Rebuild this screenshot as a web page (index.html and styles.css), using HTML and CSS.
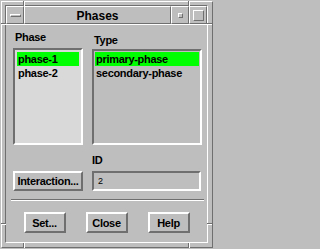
FILE: index.html
```html
<!DOCTYPE html>
<html>
<head>
<meta charset="utf-8">
<title>Phases</title>
<link rel="stylesheet" href="styles.css">
</head>
<body>
<div class="window">
  <div class="frame">
    <div class="inner">
      <div class="titlebar">
        <div class="tbtn"><span class="menu-bar"></span></div>
        <div class="title">Phases</div>
        <div class="tbtn"><span class="min-box"></span></div>
        <div class="tbtn"><span class="max-box"></span></div>
      </div>
      <div class="client">
        <div class="grid">
          <div class="label phase-label">Phase</div>
          <div class="label type-label">Type</div>
          <ul class="list phase-list">
            <li class="sel">phase-1</li>
            <li>phase-2</li>
          </ul>
          <ul class="list type-list">
            <li class="sel">primary-phase</li>
            <li>secondary-phase</li>
          </ul>
          <div class="spacer"></div>
          <div class="label id-label">ID</div>
          <button class="btn interaction">Interaction...</button>
          <div class="field">2</div>
        </div>
        <div class="sep"></div>
        <div class="actions">
          <button class="btn act">Set...</button>
          <button class="btn act">Close</button>
          <button class="btn act">Help</button>
        </div>
      </div>
    </div>
  </div>
  <svg class="marks" width="214" height="249" viewBox="0 0 214 249" shape-rendering="crispEdges">
    <rect x="23" y="1" width="1" height="5" fill="#6f6f6f"/>
    <rect x="24" y="1" width="1" height="5" fill="#ffffff"/>
    <rect x="188" y="1" width="1" height="5" fill="#6f6f6f"/>
    <rect x="189" y="1" width="1" height="5" fill="#ffffff"/>
    <rect x="23" y="243" width="1" height="5" fill="#6f6f6f"/>
    <rect x="24" y="243" width="1" height="5" fill="#ffffff"/>
    <rect x="188" y="243" width="1" height="5" fill="#6f6f6f"/>
    <rect x="189" y="243" width="1" height="5" fill="#ffffff"/>
    <rect x="1" y="23" width="5" height="1" fill="#6f6f6f"/>
    <rect x="1" y="24" width="5" height="1" fill="#ffffff"/>
    <rect x="1" y="223" width="5" height="1" fill="#6f6f6f"/>
    <rect x="1" y="224" width="5" height="1" fill="#ffffff"/>
    <rect x="207" y="23" width="5" height="1" fill="#6f6f6f"/>
    <rect x="207" y="24" width="5" height="1" fill="#ffffff"/>
    <rect x="207" y="223" width="5" height="1" fill="#6f6f6f"/>
    <rect x="207" y="224" width="5" height="1" fill="#ffffff"/>
  </svg>
</div>
</body>
</html>
```

FILE: styles.css
```css
html, body {
  margin: 0;
  padding: 0;
  background: #bebebe;
}

.window {
  position: relative;
  width: 214px;
  height: 249px;
  box-sizing: border-box;
  padding: 1px;
  background: #bebebe;
  font-family: "Liberation Sans", Arial, sans-serif;
  color: #000;
}

.frame {
  height: 100%;
  box-sizing: border-box;
  border: 1px solid;
  border-color: #ffffff #6f6f6f #6f6f6f #ffffff;
  padding: 3px 4px 4px 3px;
}

.inner {
  height: 100%;
  box-sizing: border-box;
  border: 1px solid;
  border-color: #6f6f6f #ffffff #ffffff #6f6f6f;
  display: flex;
  flex-direction: column;
}

.titlebar {
  display: flex;
  height: 18px;
  flex: 0 0 18px;
}

.tbtn {
  width: 18px;
  height: 18px;
  box-sizing: border-box;
  border: 1px solid;
  border-color: #ffffff #6f6f6f #6f6f6f #ffffff;
  display: flex;
  align-items: center;
  justify-content: center;
}

.menu-bar {
  display: block;
  width: 11px;
  height: 3px;
  box-sizing: border-box;
  border: 1px solid;
  border-color: #ffffff #6f6f6f #6f6f6f #ffffff;
}

.min-box {
  display: block;
  width: 5px;
  height: 5px;
  box-sizing: border-box;
  border: 1px solid;
  border-color: #ffffff #6f6f6f #6f6f6f #ffffff;
}

.max-box {
  display: block;
  width: 11px;
  height: 11px;
  box-sizing: border-box;
  border: 1px solid;
  border-color: #ffffff #6f6f6f #6f6f6f #ffffff;
}

.title {
  flex: 1;
  height: 18px;
  box-sizing: border-box;
  border: 1px solid;
  border-color: #ffffff #6f6f6f #6f6f6f #ffffff;
  display: flex;
  align-items: center;
  justify-content: center;
  font-size: 12px;
  font-weight: bold;
  padding-top: 1px;
}

.client {
  flex: 1;
  border-top: 1px solid #ffffff;
  padding-top: 6px;
}

.grid {
  display: grid;
  grid-template-columns: 70px 110px;
  column-gap: 9px;
  margin-left: 7px;
  align-items: start;
}

.label {
  font-size: 11px;
  font-weight: bold;
  letter-spacing: -0.3px;
  line-height: 13px;
  height: 13px;
}

.phase-label {
  padding-left: 2px;
}

.type-label {
  padding-left: 2px;
  margin-top: 3px;
}

.list {
  list-style: none;
  margin: 0;
  box-sizing: border-box;
  border: 2px solid;
  border-color: #6f6f6f #ffffff #ffffff #6f6f6f;
  font-size: 11px;
  font-weight: bold;
  letter-spacing: -0.3px;
}

.list li {
  height: 14px;
  line-height: 14px;
  padding-left: 1px;
  white-space: nowrap;
}

.list li.sel {
  background: #00ff00;
}

.phase-list {
  margin-top: 1px;
  height: 97px;
  background: #d9d9d9;
  padding: 2px 2px 0 2px;
}

.type-list {
  margin-top: 2px;
  height: 96px;
  background: #bebebe;
  padding: 1px 1px 0 1px;
}

.spacer {
  height: 13px;
}

.id-label {
  margin-top: 9px;
}

.btn {
  box-sizing: border-box;
  border: 2px solid;
  border-color: #ffffff #6f6f6f #6f6f6f #ffffff;
  background: #bebebe;
  font-family: "Liberation Sans", Arial, sans-serif;
  font-size: 11px;
  font-weight: bold;
  letter-spacing: -0.3px;
  color: #000;
  padding: 0;
  margin: 0;
  display: flex;
  align-items: center;
  justify-content: center;
}

.interaction {
  margin-top: 4px;
  width: 70px;
  height: 20px;
}

.field {
  margin-top: 4px;
  width: 109px;
  height: 20px;
  box-sizing: border-box;
  border: 2px solid;
  border-color: #6f6f6f #ffffff #ffffff #6f6f6f;
  font-size: 9px;
  line-height: 16px;
  padding-left: 4px;
}

.sep {
  margin: 8px 3px 0 5px;
  border-top: 1px solid #6f6f6f;
  border-bottom: 1px solid #ffffff;
}

.actions {
  display: flex;
  justify-content: center;
  gap: 20px;
  margin-top: 11px;
}

.act {
  width: 42px;
  height: 21px;
}

.marks {
  position: absolute;
  left: 0;
  top: 0;
  pointer-events: none;
}
```
